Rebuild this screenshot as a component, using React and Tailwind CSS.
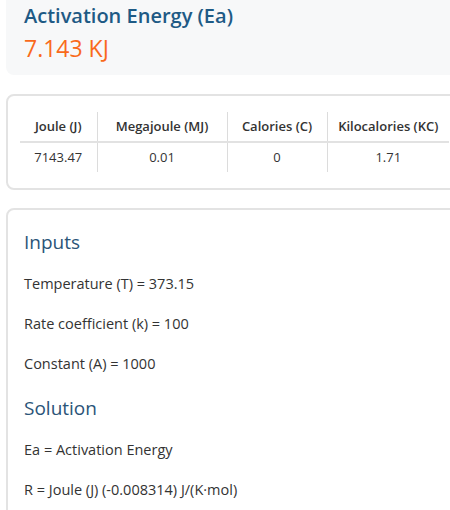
import React from 'react';

const ROWS = [
    { label: 'Joule (J)', value: '7143.47', w: 'w-[77px]' },
    { label: 'Megajoule (MJ)', value: '0.01', w: 'w-[130px]' },
    { label: 'Calories (C)', value: '0', w: 'w-[100px]' },
    { label: 'Kilocalories (KC)', value: '1.71', w: 'w-[122px]' },
];

const LINES_IN = ['Temperature (T) = 373.15', 'Rate coefficient (k) = 100', 'Constant (A) = 1000'];
const LINES_SOL = ['Ea = Activation Energy', 'R = Joule (J) (-0.008314) J/(K·mol)'];

export default function App() {
    return (
        <div className="w-[450px] h-[510px] overflow-hidden bg-white text-[#333] font-['Open_Sans',sans-serif]">
            <div className="w-[480px] pl-[6px]">
                <div className="bg-[#f7f8f9] rounded-b-lg px-[18px] pt-[2px] pb-[12px] h-[75px]">
                    <h1 className="text-[20px] font-semibold text-[#1e5a85] leading-[28px]">Activation Energy (Ea)</h1>
                    <div className="text-[23px] text-[#f96a1b] leading-[32px] mt-[2px]">7.143 KJ</div>
                </div>

                <div className="mt-[19px] border-2 border-[#e3e3e3] rounded-lg pl-[12px] pt-[16px] pb-[16px] h-[96px]">
                    <table className="text-[13px] text-center border-collapse">
                        <thead>
                            <tr className="border-b-2 border-[#e2e2e2]">
                                {ROWS.map((r, i) => (
                                    <th key={r.label} className={`${r.w} h-[30px] font-semibold ${i < 3 ? 'border-r border-[#dcdcdc]' : ''}`}>{r.label}</th>
                                ))}
                            </tr>
                        </thead>
                        <tbody>
                            <tr>
                                {ROWS.map((r, i) => (
                                    <td key={r.label} className={`h-[30px] ${i < 3 ? 'border-r border-[#dcdcdc]' : ''}`}>{r.value}</td>
                                ))}
                            </tr>
                        </tbody>
                    </table>
                </div>

                <div className="mt-[18px] border-2 border-[#e3e3e3] rounded-lg px-[16px] pt-[18px] h-[320px]">
                    <h2 className="text-[19px] text-[#2b5478] leading-[28px]">Inputs</h2>
                    {LINES_IN.map((l, i) => (
                        <p key={l} className={`text-[14.5px] leading-[20px] ${i === 0 ? 'mt-[18px]' : 'mt-[20px]'}`}>{l}</p>
                    ))}
                    <h2 className="text-[19px] text-[#2b5478] leading-[28px] mt-[20px]">Solution</h2>
                    {LINES_SOL.map((l, i) => (
                        <p key={l} className={`text-[14.5px] leading-[20px] ${i === 0 ? 'mt-[18px]' : 'mt-[20px]'}`}>{l}</p>
                    ))}
                </div>
            </div>
        </div>
    );
}
